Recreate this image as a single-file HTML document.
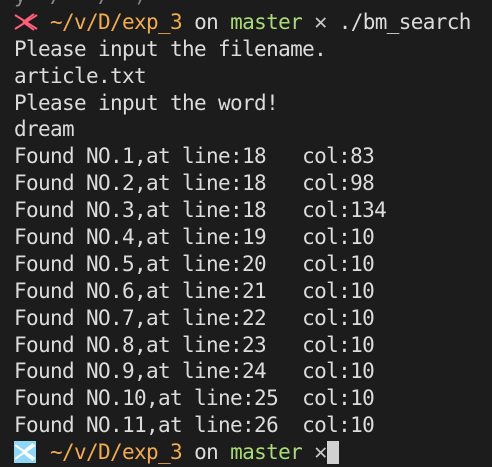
<!DOCTYPE html>
<html><head><meta charset="utf-8"><style>
html,body{margin:0;padding:0;background:#1c1c1c;width:492px;height:467px;overflow:hidden}
#t{position:absolute;left:14px;top:-18px;font-family:"DejaVu Sans Mono","Liberation Mono",monospace;font-size:21px;letter-spacing:-0.64px;color:#dcdcdc}
#t div{height:26.9px;line-height:26.9px;white-space:pre}
.o{color:#f2ac4e}.g{color:#a9dc76}.x{color:#c8c8c8;font-size:22px}
.ic{display:inline-block;width:24px;height:22px;vertical-align:-4px}
.cur{display:inline-block;width:12px;height:23px;background:#d0d0d0;vertical-align:-5px}
</style></head><body><div id="t">
<div><span style="color:#888">y  /   /  )</span></div>
<div><svg class="ic" viewBox="0 0 24 22"><g stroke="#ff5f7a" stroke-width="2" fill="none"><path d="M1 4 L23 18 M1 18 L23 4 M9 11 L20 3 M9 11 L20 19 M13 8 L13 14"/></g></svg> <span class="o">~/v/D/exp_3</span> on <span class="g">master</span> <span class="x">✕</span> ./bm_search</div>
<div>Please input the filename.</div>
<div>article.txt</div>
<div>Please input the word!</div>
<div>dream</div>
<div>Found NO.1,at line:18   col:83</div>
<div>Found NO.2,at line:18   col:98</div>
<div>Found NO.3,at line:18   col:134</div>
<div>Found NO.4,at line:19   col:10</div>
<div>Found NO.5,at line:20   col:10</div>
<div>Found NO.6,at line:21   col:10</div>
<div>Found NO.7,at line:22   col:10</div>
<div>Found NO.8,at line:23   col:10</div>
<div>Found NO.9,at line:24   col:10</div>
<div>Found NO.10,at line:25  col:10</div>
<div>Found NO.11,at line:26  col:10</div>
<div><svg class="ic" viewBox="0 0 24 22"><rect width="22" height="22" fill="#8fd8f5"/><g stroke="#fff" stroke-width="2" fill="none"><path d="M1 4 L21 18 M1 18 L21 4 M9 11 L19 3 M9 11 L19 19"/></g></svg> <span class="o">~/v/D/exp_3</span> on <span class="g">master</span> <span class="x">✕</span><span class="cur"></span></div>
</div></body></html>
